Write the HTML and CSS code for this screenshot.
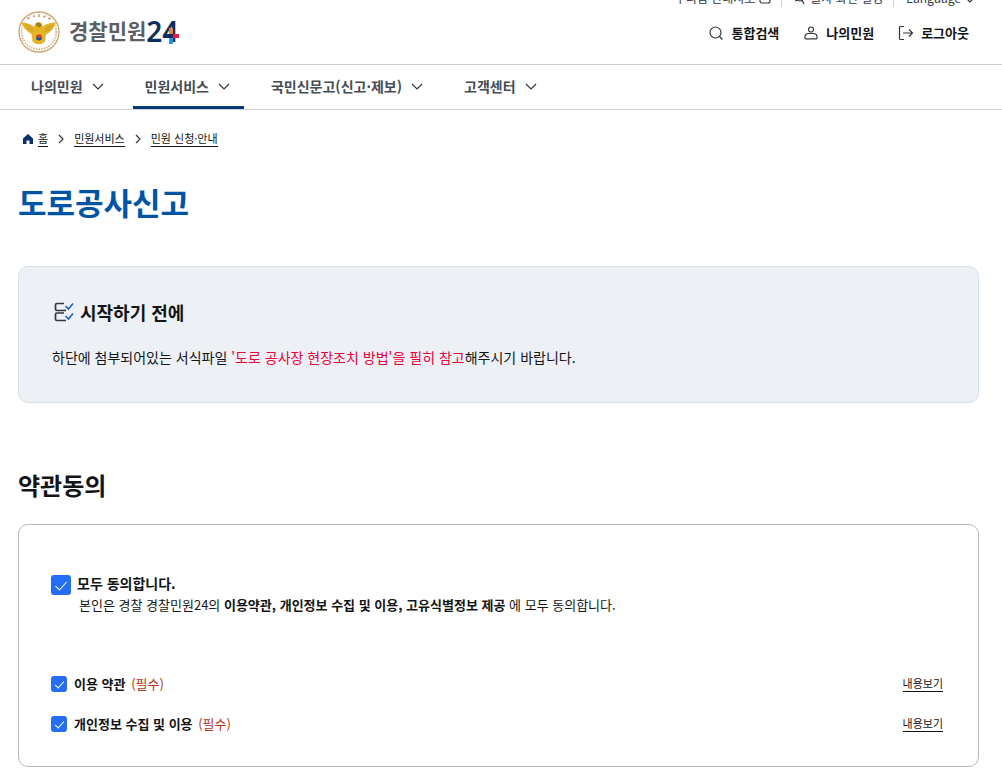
FILE: index.html
```
<!DOCTYPE html>
<html lang="ko">
<head>
    <meta charset="UTF-8">
    <meta name="viewport" content="width=device-width, initial-scale=1.0">
    <title>도로공사신고 | 경찰민원24</title>
    <link rel="stylesheet" href="styles.css">
</head>
<body>
    <header>
        <div class="util-bar">
            <a href="#">누리집 안내지도 <svg width="12" height="12" viewBox="0 0 12 12"><rect x="1" y="1" width="10" height="10" rx="2"/></svg></a>
            <a href="#"><svg width="12" height="12" viewBox="0 0 12 12"><circle cx="6" cy="6" r="3"/><path d="M1 9l3-1M8 8l2 4"/></svg> 글자·화면 설정</a>
            <a href="#">Language <svg width="9" height="12" viewBox="0 0 9 12"><path d="M2 7l3 3 3-3"/></svg></a>
        </div>
        <div class="header-main">
            <a class="logo" href="#">
                <svg class="emblem" width="42" height="42" viewBox="0 0 42 42">
                    <circle cx="21" cy="21" r="20" fill="#fff" stroke="#c8a878" stroke-width="1.4"/>
                    <circle cx="21" cy="21" r="17.3" fill="none" stroke="#d3b58a" stroke-width="2" stroke-dasharray="1.4 1.2"/>
                    <path d="M4 17C6 8 13 2.800 21 2.800S36 8 38 17z" fill="#fff"/>
                    <path d="M9.500 8l2-1.500M15 4.800l2 .6M21 3.500v2.500M27.500 5l-2 1M32.500 8l-2-1" stroke="#b98c4c" stroke-width="1.4"/>
                    <path d="M3.500 11.500c5 .2 9 1.500 12.500 4l1.500-2.500c.8-2 3-2.700 5-1.500 1.500 1 2 2.500 2 4 3.500-2.500 8-3.900 13.500-4-1.200 5-4.500 9-10 12l-1 7-3.500 2.500h-5.500l-3.500-2.500-1-7.500c-5-2.500-8.500-6.500-10-11.500z" fill="#e5b324"/>
                    <path d="M7 13.500l8 5M9 17l6 4M35 13.500l-8 5M33 17l-6 4" fill="none" stroke="#c4952a" stroke-width="1"/>
                    <path d="M17.500 12.500l3.500-1 3 2-2 3-3-1z" fill="#a77b24"/>
                    <path d="M18 26.500a3 3 0 0 1 6 0z" fill="#d4333f"/>
                    <path d="M18 26.500a3 3 0 0 0 6 0z" fill="#174d9d"/>
                </svg>
                <span class="logo-text">경찰민원</span>
                <span class="logo-num">24<svg width="14" height="20" viewBox="0 0 14 20"><path d="M6 0v6" stroke="#f58220"/><path d="M6 10v6" stroke="#1b9be0"/><path d="M0 8h8" stroke="#0b2f5c"/><path d="M8 8h6" stroke="#ed174b"/></svg></span>
            </a>
            <div class="user-menu">
                <a href="#"><svg width="16" height="16" viewBox="0 0 16 16"><circle cx="7.500" cy="7.500" r="5.500"/><path d="M11.500 11.500l3 3"/></svg>통합검색</a>
                <a href="#"><svg width="16" height="16" viewBox="0 0 16 16"><circle cx="8" cy="4.500" r="2.500"/><path d="M5.500 8.500h5a3.500 3.500 0 0 1 3.500 3.500v1q0 .8-.8.8H2.800q-.8 0-.8-.8v-1a3.500 3.500 0 0 1 3.500-3.500z"/></svg>나의민원</a>
                <a href="#"><svg width="16" height="16" viewBox="0 0 16 16"><path d="M6 1.500H2.500Q1.500 1.500 1.500 2.500v11q0 1 1 1H6M5 8h9.500M11 4.500L14.500 8 11 11.500"/></svg>로그아웃</a>
            </div>
        </div>
        <nav class="gnb">
            <button type="button">나의민원 <svg width="12" height="8" viewBox="0 0 12 8"><path d="M1 1l5 5 5-5"/></svg></button>
            <button type="button" class="active">민원서비스 <svg width="12" height="8" viewBox="0 0 12 8"><path d="M1 1l5 5 5-5"/></svg></button>
            <button type="button">국민신문고(신고·제보) <svg width="12" height="8" viewBox="0 0 12 8"><path d="M1 1l5 5 5-5"/></svg></button>
            <button type="button">고객센터 <svg width="12" height="8" viewBox="0 0 12 8"><path d="M1 1l5 5 5-5"/></svg></button>
        </nav>
    </header>

    <main>
        <div class="breadcrumb">
            <svg class="home" width="10" height="10" viewBox="0 0 10 10"><path d="M5 0L0 4.500V10h3.500V6.500h3V10H10V4.500z"/></svg>
            <a href="#">홈</a>
            <svg class="sep" width="6" height="10" viewBox="0 0 6 10"><path d="M1 1l4 4-4 4"/></svg>
            <a href="#">민원서비스</a>
            <svg class="sep" width="6" height="10" viewBox="0 0 6 10"><path d="M1 1l4 4-4 4"/></svg>
            <a href="#">민원 신청·안내</a>
        </div>

        <h1>도로공사신고</h1>

        <section class="guide-box">
            <h3>
                <svg width="20" height="20" viewBox="0 0 20 20"><path d="M10 1.500H3q-1.500 0-1.500 1.500v4q0 1.500 1.500 1.500h9M10 11H3q-1.500 0-1.500 1.500V17q0 1.500 1.500 1.500h9" stroke="#33363d"/><path d="M11.500 4l3 3L19 1.500M11.500 14l3 3 4.500-5.500" stroke="#2461c4"/></svg>
                시작하기 전에
            </h3>
            <p>하단에 첨부되어있는 서식파일 <span class="point">'도로 공사장 현장조치 방법'을 필히 참고</span>해주시기 바랍니다.</p>
        </section>

        <h2>약관동의</h2>

        <form class="agree-box">
            <div class="agree-all">
                <input type="checkbox" id="agreeAll" class="large" checked>
                <div>
                    <label for="agreeAll">모두 동의합니다.</label>
                    <p>본인은 경찰 경찰민원24의 <b>이용약관, 개인정보 수집 및 이용, 고유식별정보 제공</b> 에 모두 동의합니다.</p>
                </div>
            </div>
            <div class="agree-item">
                <input type="checkbox" id="agree1" checked>
                <label for="agree1">이용 약관 <span>(필수)</span></label>
                <a href="#">내용보기</a>
            </div>
            <div class="agree-item">
                <input type="checkbox" id="agree2" checked>
                <label for="agree2">개인정보 수집 및 이용 <span>(필수)</span></label>
                <a href="#">내용보기</a>
            </div>
        </form>
    </main>
</body>
</html>
```
FILE: styles.css
```
* {
    box-sizing: border-box;
}
body {
    margin: 0;
    background-color: #fff;
    color: #131416;
    font-family: "Noto Sans CJK KR", sans-serif;
    font-size: 13px;
}
h1, h2, h3, p {
    margin: 0;
}
a {
    color: inherit;
    text-decoration: none;
}
svg {
    fill: none;
    stroke: #33363d;
    stroke-width: 1.2;
    flex-shrink: 0;
}

/* header */
.util-bar {
    display: flex;
    justify-content: flex-end;
    align-items: flex-end;
    height: 7px;
    padding-right: 28px;
    overflow: hidden;
    font-size: 12px;
    line-height: 18px;
    color: #33363d;
}
.util-bar a {
    display: flex;
    align-items: center;
    gap: 4px;
}
.util-bar a + a {
    margin-left: 10px;
    padding-left: 12px;
    border-left: 1px solid #cdd1d5;
}
.header-main {
    display: flex;
    justify-content: space-between;
    align-items: center;
    height: 57px;
    padding: 0 33px 8px 18px;
}
.logo {
    display: flex;
    align-items: center;
}
.logo .emblem {
    stroke: none;
}
.logo-text {
    margin-left: 9px;
    font-size: 21px;
    line-height: 32px;
    padding-bottom: 3px;
    font-weight: 700;
    color: #5d5e62;
}
.logo-num {
    position: relative;
    padding-bottom: 2px;
    font-family: "Noto Sans", sans-serif;
    font-size: 28px;
    line-height: 32px;
    font-weight: 600;
    color: #0b2f5c;
}
.logo-num svg {
    position: absolute;
    right: -1px;
    bottom: 1px;
    stroke-width: 4;
}
.user-menu {
    display: flex;
    gap: 24px;
    padding-top: 2px;
    font-weight: 700;
}
.user-menu a {
    display: flex;
    align-items: center;
    gap: 7px;
}
.gnb {
    display: flex;
    gap: 15px;
    height: 46px;
    padding-left: 19px;
    border-top: 1px solid #cdd1d5;
    border-bottom: 1px solid #cdd1d5;
}
.gnb button {
    display: flex;
    align-items: center;
    gap: 9px;
    padding: 1px 14px 0 12px;
    border: none;
    border-bottom: 3px solid transparent;
    background: none;
    font-family: inherit;
    font-size: 14px;
    font-weight: 700;
    color: #464c53;
    cursor: pointer;
}
.gnb button.active {
    border-bottom-color: #063a74;
}
.gnb svg {
    margin-top: 2px;
}

/* content */
main {
    padding: 0 23px 17px 18px;
}
.breadcrumb {
    display: flex;
    align-items: center;
    gap: 10px;
    margin-top: 21px;
    padding-left: 5px;
    font-size: 11px;
    line-height: 15px;
}
.breadcrumb a {
    border-bottom: 1px solid #131416;
}
.breadcrumb .home {
    margin-right: -5px;
    fill: #0b2f73;
    stroke: none;
}
h1 {
    margin-top: 32px;
    font-size: 31px;
    line-height: 46px;
    color: #0054a6;
}
.guide-box {
    margin-top: 41px;
    padding: 30px 33px 33px;
    border: 1px solid #d6e0eb;
    border-radius: 10px;
    background-color: #edf1f6;
}
.guide-box h3 {
    display: flex;
    align-items: center;
    gap: 6px;
    padding-left: 2px;
    font-size: 18px;
    line-height: 30px;
}
.guide-box h3 svg {
    stroke-width: 1.7;
}
.guide-box p {
    margin-top: 18px;
    font-size: 14px;
    line-height: 24px;
}
.point {
    color: #eb003b;
}
h2 {
    margin-top: 64px;
    font-size: 24px;
    line-height: 36px;
}
.agree-box {
    margin-top: 21px;
    padding: 47px 35px 22px 32px;
    border: 1px solid #b1b8be;
    border-radius: 10px;
}
.agree-all {
    display: flex;
    gap: 6px;
    margin-bottom: 48px;
}
.agree-all label {
    font-size: 14px;
    line-height: 22px;
    font-weight: 700;
}
.agree-all p {
    padding-left: 2px;
    line-height: 22px;
}
.agree-item {
    display: flex;
    align-items: center;
    height: 40px;
    gap: 7px;
}
.agree-item label {
    padding-bottom: 2px;
    font-weight: 700;
}
.agree-item span {
    margin-left: 2px;
    font-weight: 400;
    color: #b3361b;
}
.agree-item a {
    margin-left: auto;
    border-bottom: 1px solid #131416;
    font-size: 11px;
    line-height: 15px;
}
input[type="checkbox"] {
    appearance: none;
    display: grid;
    place-items: center;
    width: 16px;
    height: 16px;
    margin: 0;
    border-radius: 3px;
    background-color: #256ef4;
}
input[type="checkbox"]::after {
    content: "";
    width: 4px;
    height: 8px;
    margin-bottom: 2px;
    border: solid #fff;
    border-width: 0 1px 1px 0;
    transform: rotate(42deg);
}
input[type="checkbox"].large {
    width: 20px;
    height: 20px;
    margin-top: 3px;
}
input[type="checkbox"].large::after {
    width: 5px;
    height: 10px;
}
```
